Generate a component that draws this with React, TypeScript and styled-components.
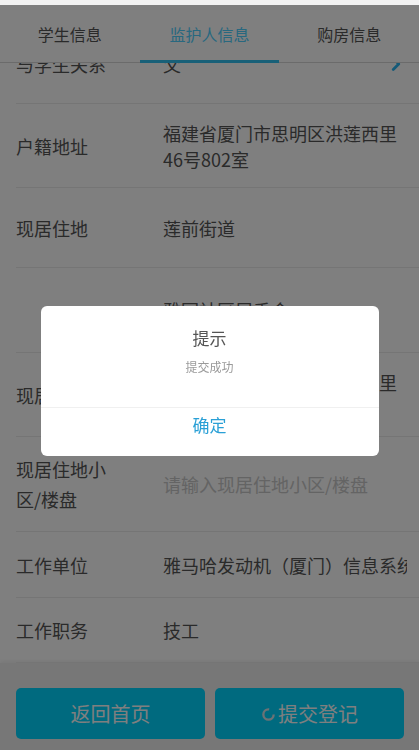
import React, { useEffect, useRef } from 'react';
import { styled, createGlobalStyle } from 'styled-components';
import { ChevronRight } from 'lucide-react';

const GlobalStyle = createGlobalStyle`
    html, body {
        margin: 0;
        padding: 0;
        height: 100%;
        background: #f2f2f2;
        font-family: "Noto Sans CJK SC", "Noto Sans", sans-serif;
    }
    #root {
        height: 100%;
    }
`

type Row = {
    label: string;
    value: string;
    height: number;
    placeholder?: boolean;
    arrow?: boolean;
    nowrap?: boolean;
};

const rows: Row[] = [
    { label: '与学生关系', value: '父', height: 80, arrow: true },
    { label: '户籍地址', value: '福建省厦门市思明区洪莲西里46号802室', height: 84 },
    { label: '现居住地', value: '莲前街道', height: 80 },
    { label: '', value: '雅园社区居委会', height: 85 },
    { label: '现居地址', value: '福建省厦门市思明区洪莲西里46号802室', height: 84 },
    { label: '现居住地小区/楼盘', value: '请输入现居住地小区/楼盘', height: 95, placeholder: true },
    { label: '工作单位', value: '雅马哈发动机（厦门）信息系统有限公司', height: 66, nowrap: true },
    { label: '工作职务', value: '技工', height: 65 },
];

const tabs = ['学生信息', '监护人信息', '购房信息'];

export default function App() {
    const listRef = useRef<HTMLDivElement>(null);

    useEffect(() => {
        if (listRef.current) listRef.current.scrollTop = 39;
    }, []);

    return (
        <>
            <GlobalStyle />
            <Page>
                <TabBar>
                    {tabs.map((t, i) => (
                        <Tab key={t} $active={i === 1}>{t}</Tab>
                    ))}
                </TabBar>
                <List ref={listRef}>
                    {rows.map((r, i) => (
                        <FormRow key={i} $height={r.height}>
                            <Label>{r.label}</Label>
                            <Value $placeholder={r.placeholder} $nowrap={r.nowrap}>{r.value}</Value>
                            {r.arrow && (
                                <Arrow>
                                    <ChevronRight size={22} strokeWidth={3} />
                                </Arrow>
                            )}
                        </FormRow>
                    ))}
                </List>
                <BottomBar>
                    <Button>返回首页</Button>
                    <Button>
                        <Spinner viewBox="0 0 16 16">
                            <circle cx="8" cy="8" r="5.5" fill="none" stroke="#d8e4ea" strokeWidth="2.5" strokeDasharray="26 9" />
                        </Spinner>
                        提交登记
                    </Button>
                </BottomBar>
            </Page>
            <Mask>
                <Dialog>
                    <DialogBody>
                        <DialogTitle>提示</DialogTitle>
                        <DialogMessage>提交成功</DialogMessage>
                    </DialogBody>
                    <DialogButton>确定</DialogButton>
                </Dialog>
            </Mask>
        </>
    );
}

const Page = styled.div`
    margin-top: 5px;
    height: calc(100vh - 5px);
    display: flex;
    flex-direction: column;
    background: #ffffff;
    overflow: hidden;
`

const TabBar = styled.div`
    flex: 0 0 58px;
    display: flex;
    background: #ffffff;
    border-bottom: 1px solid #d6d6d6;
    box-sizing: border-box;
`

const Tab = styled.div<{ $active?: boolean }>`
    flex: 1;
    display: flex;
    align-items: center;
    justify-content: center;
    font-size: 16px;
    color: ${p => (p.$active ? '#50d0ff' : '#555555')};
    border-bottom: 3px solid ${p => (p.$active ? '#30c0f0' : 'transparent')};
    margin-bottom: -1px;
    padding-top: 3px;
`

const List = styled.div`
    flex: 1;
    overflow: hidden;
    background: #ffffff;
`

const FormRow = styled.div<{ $height: number }>`
    position: relative;
    display: flex;
    align-items: center;
    min-height: ${p => p.$height}px;
    margin-left: 16px;
    border-bottom: 1px solid #ebebeb;
    box-sizing: border-box;
`

const Label = styled.div`
    flex: 0 0 96px;
    font-size: 18px;
    line-height: 30px;
    color: #555555;
`

const Value = styled.div<{ $placeholder?: boolean; $nowrap?: boolean }>`
    flex: 1;
    min-width: 0;
    margin-left: 51px;
    margin-right: 12px;
    font-size: 18px;
    line-height: 26px;
    color: ${p => (p.$placeholder ? '#c8c8c8' : '#555555')};
    white-space: ${p => (p.$nowrap ? 'nowrap' : 'normal')};
    overflow: hidden;
`

const Arrow = styled.span`
    position: absolute;
    right: 12px;
    top: 50%;
    transform: translateY(-50%);
    display: flex;
    color: #2ab4f0;
`

const BottomBar = styled.div`
    flex: 0 0 87px;
    display: flex;
    gap: 10px;
    padding: 25px 15px 11px 16px;
    box-sizing: border-box;
    background: #eeeeee;
    box-shadow: 0 -2px 4px rgba(0, 0, 0, 0.06);
`

const Button = styled.div`
    flex: 1;
    display: flex;
    align-items: center;
    justify-content: center;
    border-radius: 5px;
    background: #00d4ff;
    color: #ffffff;
    font-size: 20px;
`

const Spinner = styled.svg`
    width: 15px;
    height: 15px;
    margin-right: 2px;
    margin-top: 2px;
`

const Mask = styled.div`
    position: fixed;
    top: 5px;
    left: 0;
    right: 0;
    bottom: 0;
    background: rgba(0, 0, 0, 0.5);
    display: flex;
    justify-content: center;
    padding-top: 301px;
    box-sizing: border-box;
`

const Dialog = styled.div`
    width: 338px;
    height: 150px;
    background: #ffffff;
    border-radius: 6px;
    display: flex;
    flex-direction: column;
    overflow: hidden;
`

const DialogBody = styled.div`
    flex: 0 0 102px;
    display: flex;
    flex-direction: column;
    align-items: center;
    padding-top: 20px;
    box-sizing: border-box;
    border-bottom: 1px solid #f0f0f0;
`

const DialogTitle = styled.div`
    font-size: 17px;
    line-height: 24px;
    color: #555555;
`

const DialogMessage = styled.div`
    margin-top: 8px;
    font-size: 12px;
    line-height: 18px;
    color: #9a9a9a;
`

const DialogButton = styled.div`
    flex: 1;
    display: flex;
    align-items: center;
    justify-content: center;
    padding-bottom: 16px;
    font-size: 17px;
    color: #2aa0d6;
`
